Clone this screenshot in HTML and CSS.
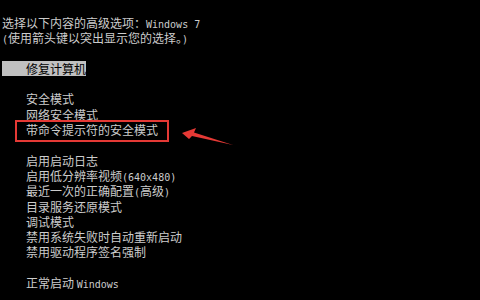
FILE: index.html
```html
<!DOCTYPE html>
<html lang="zh-CN">
<head>
    <meta charset="UTF-8">
    <meta name="viewport" content="width=device-width, initial-scale=1.0">
    <title>高级启动选项</title>
    <link rel="stylesheet" href="styles.css">
</head>
<body>
    <div class="screen">
        <div class="line">选择以下内容的高级选项：<span class="en">Windows 7</span></div>
        <div class="line"><span class="en">(</span>使用箭头键以突出显示您的选择。<span class="en">)</span></div>
        <div class="line"></div>
        <div class="line"><span class="selected">修复计算机</span></div>
        <div class="line"></div>
        <div class="line item">安全模式</div>
        <div class="line item">网络安全模式</div>
        <div class="line item">带命令提示符的安全模式</div>
        <div class="line"></div>
        <div class="line item">启用启动日志</div>
        <div class="line item">启用低分辨率视频<span class="en">(640x480)</span></div>
        <div class="line item">最近一次的正确配置<span class="en">(</span>高级<span class="en">)</span></div>
        <div class="line item">目录服务还原模式</div>
        <div class="line item">调试模式</div>
        <div class="line item">禁用系统失败时自动重新启动</div>
        <div class="line item">禁用驱动程序签名强制</div>
        <div class="line"></div>
        <div class="line item">正常启动 <span class="en">Windows</span></div>

        <!-- annotation over the screenshot -->
        <svg class="mark" width="480" height="300" viewBox="0 0 480 300">
            <rect x="16" y="121" width="152" height="20" fill="none" stroke="#e53935" stroke-width="2"/>
            <polygon points="182,133 196,128 194,132.5 233,145 192,136 189,139" fill="#e53935"/>
        </svg>
    </div>
</body>
</html>
```

FILE: styles.css
```css
* {
    margin: 0;
    padding: 0;
    box-sizing: border-box;
}

body {
    background: #000;
    color: #cccccc;
    font-family: "Noto Sans CJK SC", sans-serif;
    font-size: 12px;
}

.screen {
    position: relative;
    width: 480px;
    height: 300px;
    padding: 15px 0 0 2px;
    overflow: hidden;
}

.line {
    height: 15.3px;
    line-height: 15.3px;
    white-space: pre;
}

.item {
    padding-left: 24px;
}

.en {
    font-family: "DejaVu Sans Mono", monospace;
    font-size: 10px;
    line-height: 15.3px;
}

.selected {
    display: inline-block;
    height: 15.3px;
    padding-left: 24px;
    background: #c0c0c0;
    color: #000;
}

.mark {
    position: absolute;
    top: 0;
    left: 0;
    pointer-events: none;
}
```
